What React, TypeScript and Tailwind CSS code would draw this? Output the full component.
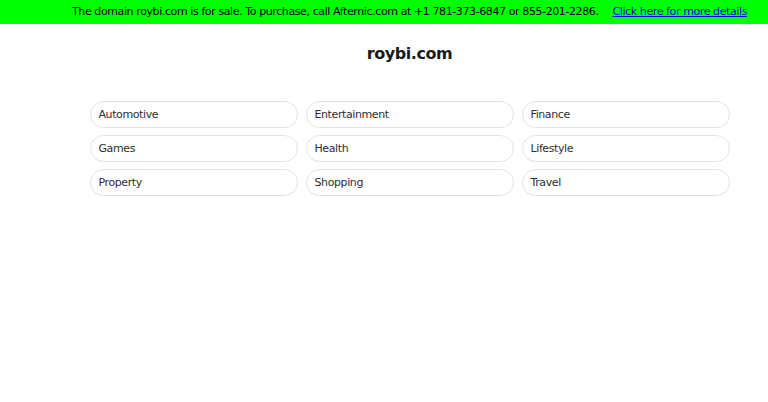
const CATEGORIES = [
  'Automotive',
  'Entertainment',
  'Finance',
  'Games',
  'Health',
  'Lifestyle',
  'Property',
  'Shopping',
  'Travel',
];

export default function App() {
  return (
    <div className="min-h-screen w-full overflow-hidden bg-white font-['DejaVu_Sans',sans-serif]">
      <div className="w-[819px]">
        {/* Sale banner */}
        <div className="flex h-6 items-center justify-center gap-[14px] bg-[#00ff00] text-[11px] tracking-[-0.4px] text-black">
          <span>
            The domain roybi.com is for sale. To purchase, call Afternic.com at +1 781-373-6847 or
            855-201-2286.
          </span>
          <a href="#" className="text-[#0000ee] underline">
            Click here for more details
          </a>
        </div>

        <h1 className="mt-[18px] text-center text-[16px] font-bold tracking-[-0.45px] text-[#1a1a1a]">
          roybi.com
        </h1>

        <div className="mx-auto mt-[35px] grid w-[640px] grid-cols-3 gap-x-2 gap-y-[7px]">
          {CATEGORIES.map((name) => (
            <a
              key={name}
              href="#"
              className="flex h-[27px] items-center rounded-full border border-[#e2e2e2] px-2 pt-[2px] text-[11px] tracking-[-0.4px] text-[#2e2e2e]"
            >
              {name}
            </a>
          ))}
        </div>
      </div>
    </div>
  );
}
